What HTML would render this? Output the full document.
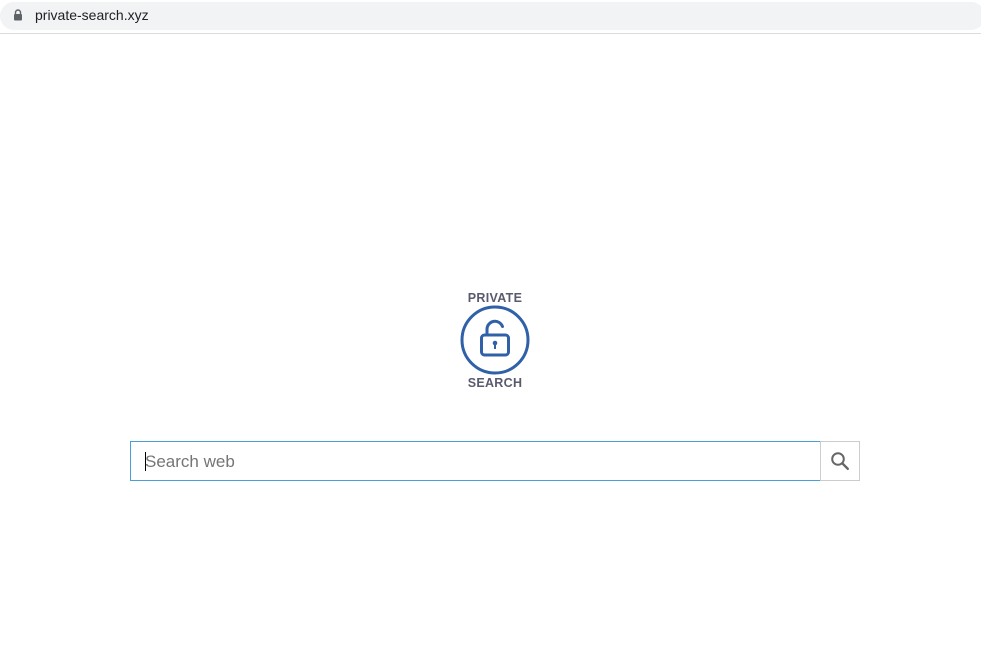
<!DOCTYPE html>
<html><head><style>
body{margin:0;width:981px;height:663px;background:#fff;position:relative;overflow:hidden;font-family:"Liberation Sans",sans-serif}
.bar{position:absolute;left:0;top:2px;width:985px;height:28px;background:#f1f3f4;border-radius:14px}
.line{position:absolute;left:0;top:33px;width:981px;height:1px;background:#dadce0}
.url{position:absolute;left:35px;top:7px;font-size:14px;color:#202124}
.inp{position:absolute;left:130px;top:441px;width:689px;height:38px;border:1px solid #4a9fd5;border-right:none;box-sizing:content-box}
.inp span{position:absolute;left:14px;top:10px;font-size:17px;color:#757575}
.inp i{position:absolute;left:14px;top:10px;width:1px;height:19px;background:#000}
.btn{position:absolute;left:820px;top:441px;width:38px;height:38px;border:1px solid #ccc}
.t{position:absolute;font-size:12.5px;font-weight:bold;color:#5a5a6e;letter-spacing:0.3px;width:100px;text-align:center;left:445px}
</style></head><body>
<div class="bar"></div><div class="line"></div>
<svg style="position:absolute;left:13px;top:9px" width="10" height="12" viewBox="0 0 10 12"><path d="M2.5 5V3.5a2.5 2.5 0 0 1 5 0V5" fill="none" stroke="#5f6368" stroke-width="1.4"/><rect x="1" y="5" width="8" height="6.5" rx="1" fill="#5f6368"/></svg>
<div class="url">private-search.xyz</div>
<div class="t" style="top:291px">PRIVATE</div>
<div class="t" style="top:376px">SEARCH</div>
<svg style="position:absolute;left:458px;top:305px" width="74" height="72" viewBox="0 0 74 72">
<circle cx="37" cy="35" r="33" fill="none" stroke="#3061a8" stroke-width="3"/>
<path d="M29 30v-6a8 8 0 0 1 15.5-2.5" fill="none" stroke="#3061a8" stroke-width="3" stroke-linecap="round"/>
<rect x="23.5" y="30" width="27" height="20" rx="3" fill="none" stroke="#3061a8" stroke-width="3"/>
<circle cx="37" cy="38" r="2.3" fill="#3061a8"/><rect x="36" y="39" width="2" height="5" fill="#3061a8"/>
</svg>
<div class="inp"><i></i><span>Search web</span></div>
<div class="btn"><svg style="position:absolute;left:9px;top:9px" width="20" height="20" viewBox="0 0 20 20"><circle cx="8" cy="8" r="5.8" fill="none" stroke="#666" stroke-width="2"/><path d="M12.3 12.3l5.5 5.5" stroke="#666" stroke-width="2.4" stroke-linecap="round"/></svg></div>
</body></html>
